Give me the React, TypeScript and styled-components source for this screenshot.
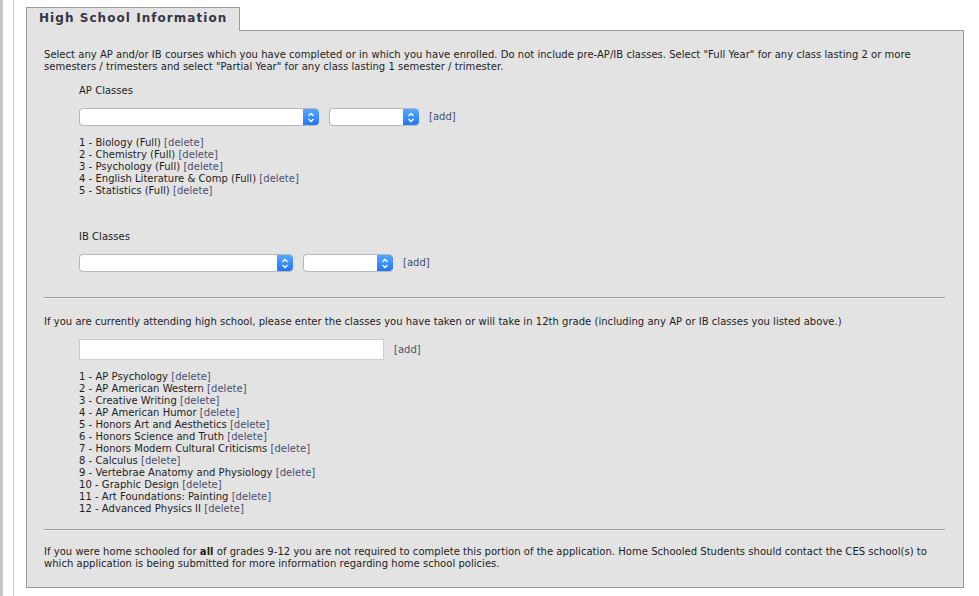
import React from "react";
import styled, { createGlobalStyle } from "styled-components";

const Global = createGlobalStyle`
  html, body { margin: 0; padding: 0; background: #ffffff; }
  body { font-family: "DejaVu Sans", Verdana, sans-serif; font-size: 10px; color: #1e1e1e; }
`;

const Page = styled.div`
  display: flex;
  min-height: 596px;
  width: 979px;
  overflow: hidden;
`;

const Rail = styled.div`
  width: 3px;
  background: #c6c6c6;
  flex: none;
`;

const Column = styled.div`
  margin-left: 10px;
  width: 947px;
  border-left: 1px solid #cfcfcf;
  border-right: 1px solid #dadada;
  padding: 7px 9px 0 12px;
  flex: none;
`;

const Tab = styled.div`
  width: 214px;
  box-sizing: border-box;
  height: 24px;
  border: 1px solid #9a9a9a;
  border-bottom: none;
  background: #e3e3e3;
  margin-bottom: -1px;
  position: relative;
  z-index: 1;
  padding: 3px 0 0 12px;
  font-weight: bold;
  font-size: 12px;
  letter-spacing: 1.05px;
  color: #363645;
  line-height: 14px;
`;

const Panel = styled.div`
  box-sizing: border-box;
  width: 938px;
  border: 1px solid #9a9a9a;
  background: #e3e3e3;
  padding: 18px 18px 17px 17px;
  line-height: 12px;
  letter-spacing: 0.03px;
`;

const Para = styled.p<{ $top?: number }>`
  margin: ${(p) => p.$top ?? 0}px 0 0;
`;

const Indented = styled.div<{ $top: number }>`
  margin-left: 35px;
  margin-top: ${(p) => p.$top}px;
`;

const Label = styled.div<{ $top?: number }>`
  line-height: 12px;
  margin-top: ${(p) => p.$top ?? 0}px;
`;

const Row = styled.div<{ $top: number }>`
  display: flex;
  align-items: center;
  gap: 10px;
  margin-top: ${(p) => p.$top}px;
`;

const SelectBox = styled.div<{ $w: number }>`
  width: ${(p) => p.$w}px;
  height: 18px;
  box-sizing: border-box;
  display: flex;
  border-radius: 4px;
  border: 1px solid #b9b9b9;
  border-right: none;
  background: #ffffff;
  overflow: hidden;
`;

const SelectField = styled.div`
  flex: 1;
`;

const SelectArrow = styled.div`
  width: 16px;
  margin: -1px 0;
  background: linear-gradient(#5aa9ff, #1f74f2);
  border-radius: 0 4px 4px 0;
  display: flex;
  align-items: center;
  justify-content: center;
`;

const TextInput = styled.div`
  width: 305px;
  height: 21px;
  box-sizing: border-box;
  border: 1px solid #cdcdcd;
  background: #ffffff;
`;

const Link = styled.span`
  color: #4b4f72;
`;

const List = styled.div<{ $top: number }>`
  margin-top: ${(p) => p.$top}px;
`;

const Item = styled.div`
  line-height: 12px;
  white-space: nowrap;
`;

const Rule = styled.div<{ $top: number }>`
  margin-top: ${(p) => p.$top}px;
  height: 1px;
  background: #9a9a9a;
  border-bottom: 1px solid #ececec;
`;

const Chevrons = () => (
  <svg width="8" height="11" viewBox="0 0 8 11">
    <path d="M1.5 4 L4 1.5 L6.5 4 M1.5 7 L4 9.5 L6.5 7" fill="none" stroke="#ffffff" strokeWidth="1.3" />
  </svg>
);

const Select = ({ w }: { w: number }) => (
  <SelectBox $w={w}>
    <SelectField />
    <SelectArrow>
      <Chevrons />
    </SelectArrow>
  </SelectBox>
);

const apClasses = [
  "Biology (Full)",
  "Chemistry (Full)",
  "Psychology (Full)",
  "English Literature & Comp (Full)",
  "Statistics (Full)",
];

const grade12 = [
  "AP Psychology",
  "AP American Western",
  "Creative Writing",
  "AP American Humor",
  "Honors Art and Aesthetics",
  "Honors Science and Truth",
  "Honors Modern Cultural Criticisms",
  "Calculus",
  "Vertebrae Anatomy and Physiology",
  "Graphic Design",
  "Art Foundations: Painting",
  "Advanced Physics II",
];

export default function App() {
  return (
    <>
      <Global />
      <Page>
        <Rail />
        <Column>
          <Tab>High School Information</Tab>
          <Panel>
            <Para>
              Select any AP and/or IB courses which you have completed or in which you have enrolled. Do not include
              pre-AP/IB classes. Select "Full Year" for any class lasting 2 or more
              <br />
              semesters / trimesters and select "Partial Year" for any class lasting 1 semester / trimester.
            </Para>
            <Indented $top={12}>
              <Label>AP Classes</Label>
              <Row $top={11}>
                <Select w={240} />
                <Select w={90} />
                <Link>[add]</Link>
              </Row>
              <List $top={11}>
                {apClasses.map((c, i) => (
                  <Item key={c}>
                    {i + 1} - {c} <Link>[delete]</Link>
                  </Item>
                ))}
              </List>
              <Label $top={34}>IB Classes</Label>
              <Row $top={11}>
                <Select w={214} />
                <Select w={90} />
                <Link>[add]</Link>
              </Row>
            </Indented>
            <Rule $top={25} />
            <Para $top={17}>
              If you are currently attending high school, please enter the classes you have taken or will take in 12th
              grade (including any AP or IB classes you listed above.)
            </Para>
            <Indented $top={11}>
              <Row $top={0}>
                <TextInput />
                <Link>[add]</Link>
              </Row>
              <List $top={11}>
                {grade12.map((c, i) => (
                  <Item key={c}>
                    {i + 1} - {c} <Link>[delete]</Link>
                  </Item>
                ))}
              </List>
            </Indented>
            <Rule $top={14} />
            <Para $top={15}>
              If you were home schooled for <b>all</b> of grades 9-12 you are not required to complete this portion of
              the application. Home Schooled Students should contact the CES school(s) to
              <br />
              which application is being submitted for more information regarding home school policies.
            </Para>
          </Panel>
        </Column>
      </Page>
    </>
  );
}
